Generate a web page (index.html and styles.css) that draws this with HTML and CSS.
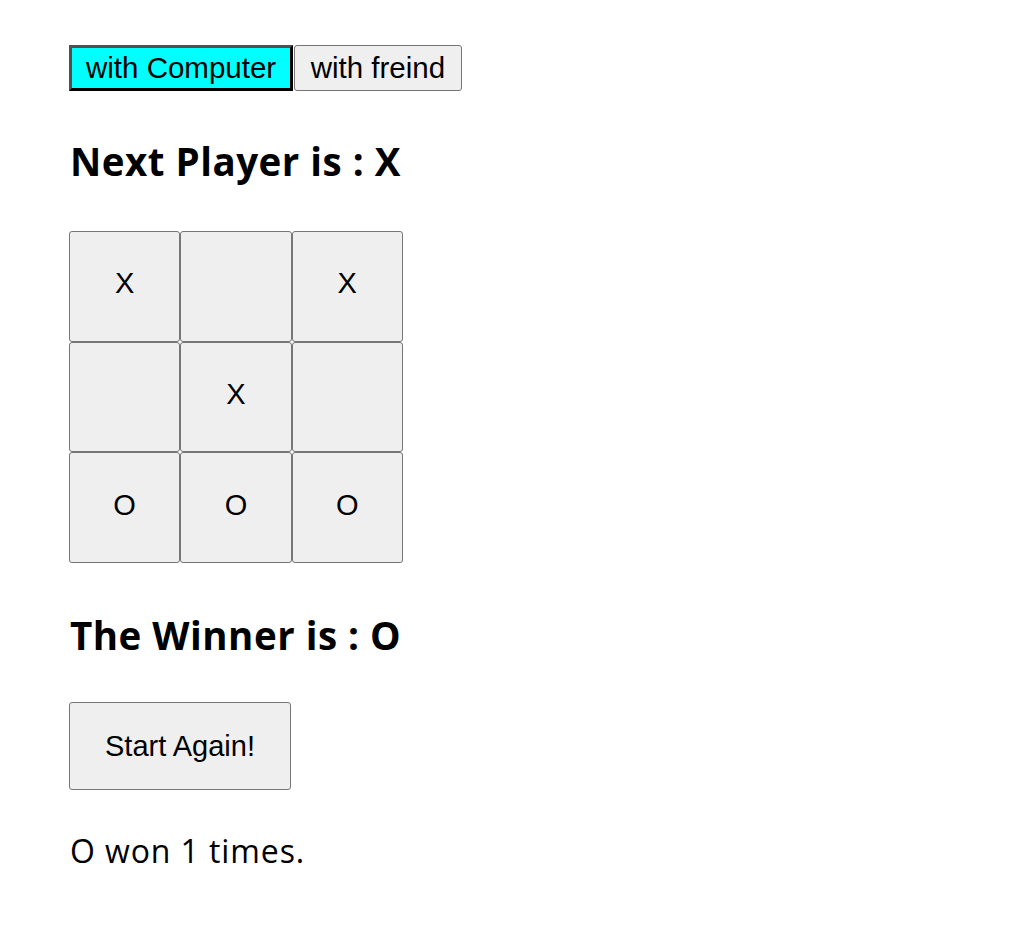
FILE: index.html
```html
<!DOCTYPE html>
<html>
<head>
<meta charset="utf-8">
<title>Tic Tac Toe</title>
<link rel="stylesheet" href="styles.css">
</head>
<body>
<div class="game">
  <div class="modes">
    <button class="mode mode-active">with Computer</button><button class="mode">with freind</button>
  </div>
  <h2 class="status">Next Player is : X</h2>
  <div class="board">
    <button class="cell">X</button>
    <button class="cell"></button>
    <button class="cell">X</button>
    <button class="cell"></button>
    <button class="cell">X</button>
    <button class="cell"></button>
    <button class="cell">O</button>
    <button class="cell">O</button>
    <button class="cell">O</button>
  </div>
  <h2 class="winner">The Winner is : O</h2>
  <button class="restart">Start Again!</button>
  <p class="score">O won 1 times.</p>
</div>
</body>
</html>
```

FILE: styles.css
```css
html, body {
  margin: 0;
  padding: 0;
  background: #ffffff;
}

.game {
  padding: 45px 0 0 69px;
  font-family: "Open Sans", "Noto Sans", sans-serif;
  color: #000;
}

.modes {
  display: flex;
  height: 46px;
}

.mode {
  font-family: "Liberation Sans", Arial, sans-serif;
  font-size: 29.5px;
  color: #000;
  background: #efefef;
  border: 1px solid #767676;
  border-radius: 3px;
  padding: 0 15.5px;
  margin: 0 0 0 1px;
  height: 46px;
  line-height: 1;
}

.mode-active {
  background: #00ffff;
  border: 3px solid;
  border-color: #505050 #000 #000 #505050;
  border-radius: 0;
  padding: 0 14px;
  margin: 0;
}

.status, .winner {
  font-size: 38.5px;
  font-weight: 700;
  line-height: 46px;
  letter-spacing: 0.5px;
  margin: 47px 0 47px 1px;
}

.winner {
  margin: 49px 0 44px 1px;
}

.board {
  display: grid;
  grid-template-columns: repeat(3, 111.3px);
  grid-template-rows: repeat(3, 110.7px);
}

.cell {
  font-family: "Liberation Sans", Arial, sans-serif;
  font-size: 29px;
  color: #000;
  background: #efefef;
  border: 1px solid #767676;
  border-radius: 3px;
  margin: 0;
  padding: 0 0 5px;
}

.restart {
  display: block;
  width: 222px;
  height: 88px;
  font-family: "Liberation Sans", Arial, sans-serif;
  font-size: 29px;
  color: #000;
  background: #efefef;
  border: 1px solid #767676;
  border-radius: 3px;
  margin: 0;
  padding: 0;
}

.score {
  font-size: 32px;
  line-height: 40px;
  letter-spacing: 0.9px;
  margin: 41px 0 0 1px;
}
```
